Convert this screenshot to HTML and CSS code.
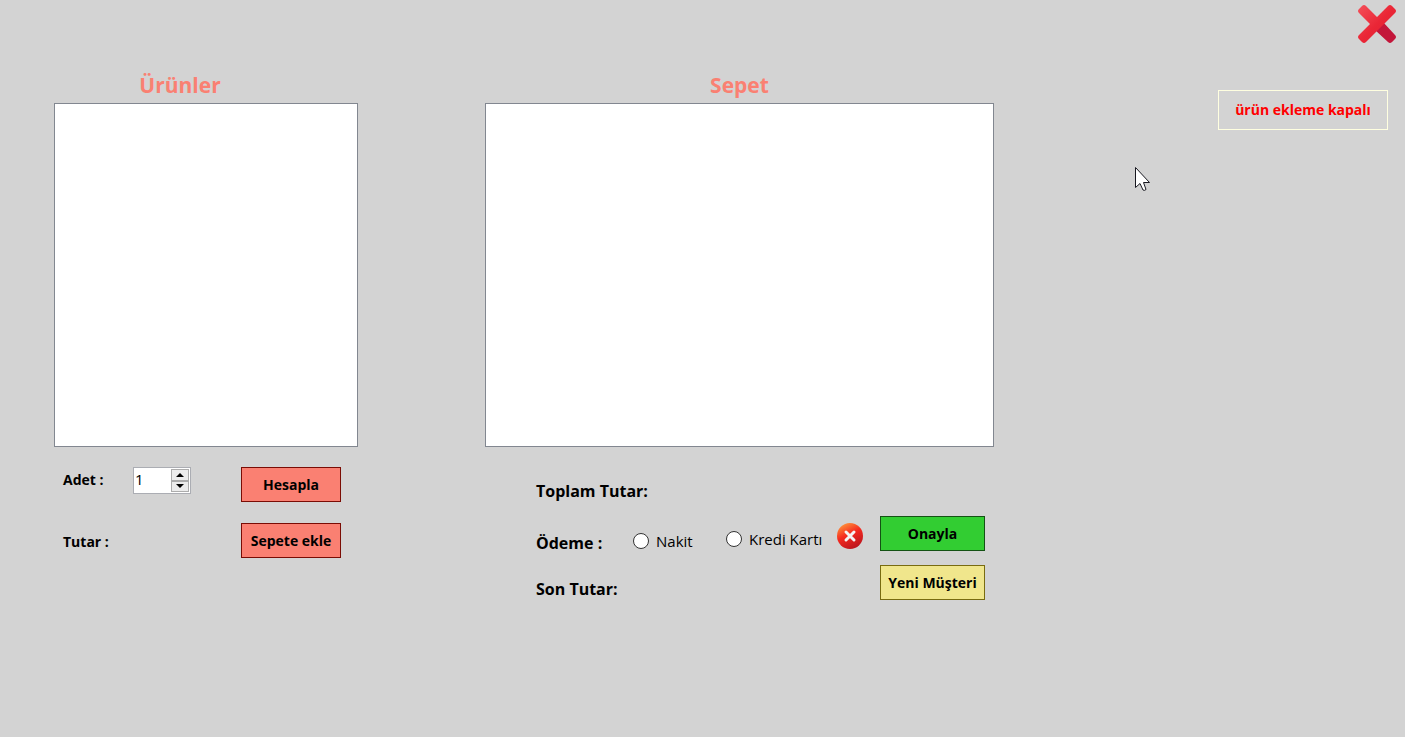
FILE: index.html
```html
<!DOCTYPE html>
<html lang="tr">
<head>
<meta charset="utf-8">
<title>Sepet</title>
<link rel="stylesheet" href="styles.css">
</head>
<body>
<header class="topbar">
  <button class="icon-button" type="button" aria-label="Kapat">
    <svg width="38" height="38" viewBox="0 0 38 38" aria-hidden="true">
      <defs>
        <linearGradient id="stroke" x1="0" y1="0" x2="1" y2="1">
          <stop offset="0" stop-color="#f4505a"/>
          <stop offset="0.5" stop-color="#ea2636"/>
          <stop offset="1" stop-color="#e01c32"/>
        </linearGradient>
      </defs>
      <path fill="#c3163a" d="M25 17 37 30Q39 32 37 34L34 37Q32 39 30 37L17 25Z"/>
      <path fill="url(#stroke)" d="M8 1 19 12 30 1Q32 -1 34 1L37 4Q39 6 37 8L8 37Q6 39 4 37L1 34Q-1 32 1 30L12 19 1 8Q-1 6 1 4L4 1Q6 -1 8 1Z"/>
    </svg>
  </button>
</header>
<main class="workspace">
  <section class="products">
    <h2 class="title title-products" id="products-title">Ürünler</h2>
    <select class="list" multiple aria-labelledby="products-title"></select>
    <form class="product-form">
      <label class="label" for="amount">Adet :</label>
      <div class="spinner">
        <input class="spinner-input" id="amount" type="number" value="1">
        <div class="spinner-buttons">
          <button class="step" type="button" aria-label="Artır"><svg width="8" height="4" viewBox="0 0 8 4"><path d="M0 4 4 0 8 4Z"/></svg></button>
          <button class="step" type="button" aria-label="Azalt"><svg width="8" height="4" viewBox="0 0 8 4"><path d="M0 0 4 4 8 0Z"/></svg></button>
        </div>
      </div>
      <button class="button salmon" type="button">Hesapla</button>
      <span class="label label-total">Tutar :</span>
      <button class="button salmon add" type="button">Sepete ekle</button>
    </form>
  </section>
  <section class="basket">
    <h2 class="title" id="basket-title">Sepet</h2>
    <select class="list" multiple aria-labelledby="basket-title"></select>
    <form class="checkout">
      <span class="summary total">Toplam Tutar:</span>
      <div class="payment">
        <span class="summary payment-label">Ödeme :</span>
        <label class="choice cash"><input class="radio" type="radio" name="payment">Nakit</label>
        <label class="choice card"><input class="radio" type="radio" name="payment">Kredi Kartı</label>
        <button class="icon-button clear" type="button" aria-label="Temizle">
          <svg width="26" height="26" viewBox="0 0 26 26" aria-hidden="true">
            <defs>
              <linearGradient id="disc" x1="0.2" y1="0" x2="0.7" y2="1">
                <stop offset="0" stop-color="#ff9a3c"/>
                <stop offset="0.45" stop-color="#f52a20"/>
                <stop offset="1" stop-color="#b8141e"/>
              </linearGradient>
            </defs>
            <circle cx="13" cy="13" r="13" fill="url(#disc)"/>
            <path d="M9 9 17 17M17 9 9 17" fill="none" stroke="#f4f4f4" stroke-width="3" stroke-linecap="round"/>
          </svg>
        </button>
      </div>
      <button class="button green" type="button">Onayla</button>
      <span class="summary final">Son Tutar:</span>
      <button class="button khaki" type="button">Yeni Müşteri</button>
    </form>
  </section>
  <aside class="tools">
    <button class="button toggle" type="button">ürün ekleme kapalı</button>
  </aside>
</main>
<svg class="pointer" width="16" height="25" viewBox="0 0 16 25" aria-hidden="true">
  <path d="M.5.5V20.500L5 16.500 8 23Q9.500 24 11 22.500L8.500 15.500H14.500Z" fill="#fff" stroke="#181820"/>
</svg>
</body>
</html>
```
FILE: styles.css
```css
* {
  box-sizing: border-box;
}

body {
  margin: 0;
  min-height: 100vh;
  background: #d3d3d3;
  color: #000;
  font: 15px/20px "Open Sans", "Noto Sans", sans-serif;
}

button,
input,
select {
  font: inherit;
  color: inherit;
}

.topbar {
  display: flex;
  justify-content: flex-end;
  padding: 5px 9px;
}

.icon-button {
  display: flex;
  padding: 0;
  border: 0;
  background: none;
}

.workspace {
  display: grid;
  grid-template-columns: minmax(304px, 304fr) 127fr minmax(509px, 509fr) 224fr minmax(170px, 170fr);
  padding: 21px 17px 21px 54px;
}

.basket {
  grid-column: 3;
}

.tools {
  grid-column: 5;
  padding-top: 21px;
}

.title {
  margin: 0 0 2px;
  color: #fa8072;
  font-size: 21px;
  font-weight: 700;
  line-height: 32px;
  text-align: center;
}

.title-products {
  padding-right: 52px;
}

.list {
  display: block;
  width: 100%;
  height: 344px;
  border: 1px solid #828790;
  border-radius: 0;
  background: #fff;
}

.product-form {
  display: grid;
  grid-template-columns: 70px 108px 100px;
  row-gap: 21px;
  align-items: start;
  padding: 20px 0 0 9px;
}

.label {
  font-size: 14px;
  font-weight: 700;
  line-height: 26px;
}

.label-total {
  line-height: 38px;
}

.spinner {
  display: flex;
  width: 58px;
  height: 27px;
  padding: 1px;
  border: 1px solid #abadb3;
  background: #fff;
}

.spinner-input {
  flex: 1;
  min-width: 0;
  padding: 0 0 3px;
  border: 0;
  background: none;
  font-size: 15px;
  appearance: textfield;
}

.spinner-input::-webkit-inner-spin-button {
  appearance: none;
}

.spinner-buttons {
  display: flex;
  flex-direction: column;
  width: 18px;
}

.step {
  display: flex;
  flex: 1;
  align-items: center;
  justify-content: center;
  padding: 0;
  border: 1px solid #acacac;
  background: #ececec;
}

.button {
  height: 35px;
  padding: 0;
  border: 1px solid;
  font-size: 14px;
  font-weight: 700;
  white-space: nowrap;
}

.salmon {
  border-color: #7a0c04;
  background: #fa8072;
}

.add {
  grid-column: 3;
}

.green {
  border-color: #145214;
  background: #32cd32;
}

.khaki {
  border-color: #786b10;
  background: #f0e68c;
}

.toggle {
  width: 100%;
  height: 40px;
  border-color: #ffffe0;
  background: none;
  color: #f00;
}

.checkout {
  display: grid;
  grid-template-columns: 1fr 105px;
  grid-template-rows: 24px 35px 35px;
  row-gap: 14px;
  align-items: start;
  padding: 31px 9px 0 51px;
}

.summary {
  font-size: 16px;
  font-weight: 700;
  line-height: 26px;
}

.total {
  grid-column: 1 / 3;
}

.payment {
  display: flex;
  align-items: flex-start;
}

.payment-label {
  width: 97px;
  padding-top: 14px;
}

.choice {
  display: flex;
  align-items: center;
  gap: 7px;
  font-size: 15px;
  white-space: nowrap;
}

.cash {
  width: 93px;
  padding-top: 15px;
}

.card {
  width: 111px;
  padding-top: 13px;
}

.radio {
  width: 16px;
  height: 16px;
  margin: 0;
  border: 1px solid #333;
  border-radius: 50%;
  background: #fff;
  appearance: none;
}

.radio:checked {
  background: radial-gradient(#222 4px, #fff 5px);
}

.clear {
  padding-top: 7px;
}

.final {
  padding-top: 11px;
}

.pointer {
  position: absolute;
  top: 167px;
  left: 1135px;
}
```
